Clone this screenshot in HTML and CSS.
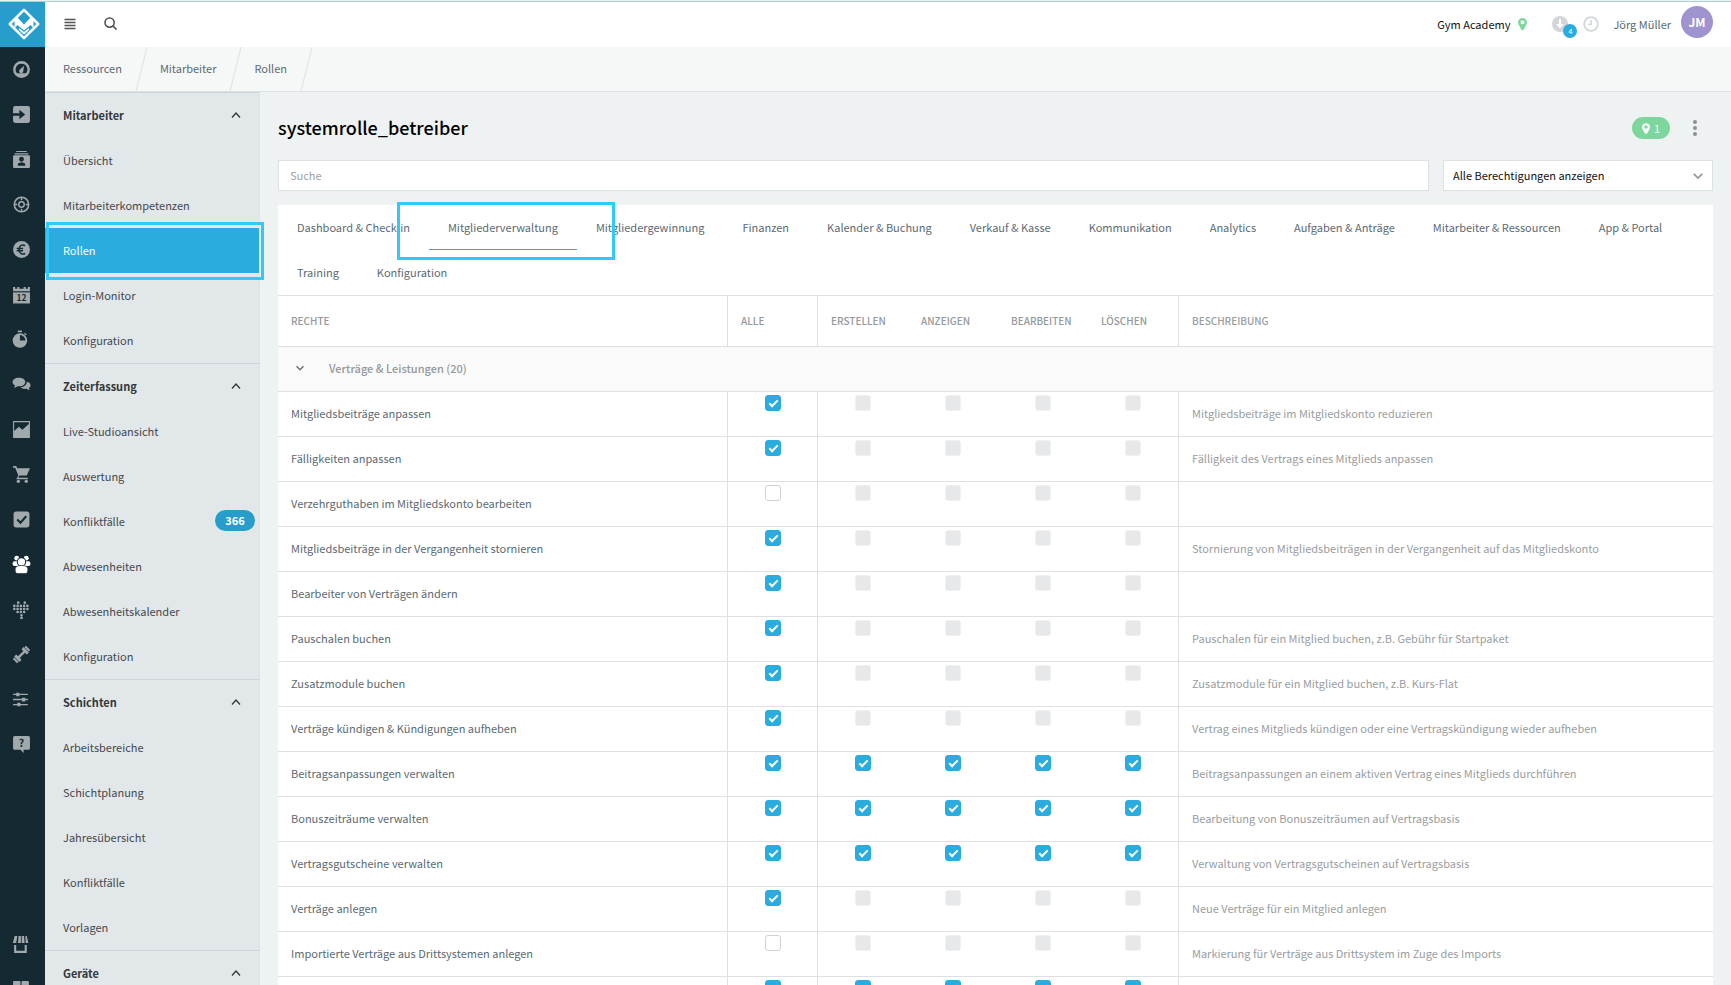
FILE: index.html
```html
<!DOCTYPE html>
<html lang="de">
<head>
    <meta charset="UTF-8">
    <meta name="viewport" content="width=device-width, initial-scale=1.0">
    <title>systemrolle_betreiber</title>
    <link rel="stylesheet" href="styles.css">
</head>
<body>
    <svg class="sprite" aria-hidden="true">
        <symbol id="i-up" viewBox="0 0 10 10"><path d="M1 7.500L5 3l4 4.500" fill="none" stroke="currentColor" stroke-width="1.300"/></symbol>
        <symbol id="i-down" viewBox="0 0 10 10"><path d="M1.500 3.200L5 6.700l3.500-3.500" fill="none" stroke="currentColor" stroke-width="1.500"/></symbol>
        <symbol id="i-pin" viewBox="0 0 9 12"><path fill-rule="evenodd" d="M4.500 0a4.500 4.500 0 0 1 4.500 4.500C9 6.500 6.500 9.500 5.500 12h-2C2.500 9.500 0 6.500 0 4.500A4.500 4.500 0 0 1 4.500 0zm0 2.300a2 2 0 1 0 0 4 2 2 0 0 0 0-4z"/></symbol>
    </svg>

    <div class="app">
        <nav class="rail" aria-label="Hauptnavigation">
            <a class="logo" href="#" aria-label="Start">
                <svg viewBox="0 0 32 32" width="32" height="32">
                    <path d="M16 1.800L30.200 16 16 30.200 1.800 16z" fill="none" stroke="#fff" stroke-width="2.500" stroke-linejoin="round"/>
                    <path d="M6.500 11.500L9 9l7 7.500L23 9l2.500 2.500V20L22.500 17 16 22.500 9.500 17l-3 3z" fill="#fff"/>
                    <path d="M11 20v2l5 4.500 5-4.500v-2l-5 4z" fill="#fff"/>
                </svg>
            </a>
            <a href="#" aria-label="Dashboard"><svg viewBox="0 0 18 18"><path fill-rule="evenodd" d="M9 1a8 8 0 1 1 0 16A8 8 0 0 1 9 1zm0 2.500a5.500 5.500 0 0 0-4.300 9h8.600A5.500 5.500 0 0 0 9 3.500z"/><path d="M11.500 5.500L10.700 10.500a2 2 0 1 1-3-1.700z"/></svg></a>
            <a href="#" aria-label="Check-in"><svg viewBox="0 0 18 18"><path d="M3 1h12a2 2 0 0 1 2 2v12a2 2 0 0 1-2 2H3a2 2 0 0 1-2-2V3a2 2 0 0 1 2-2z"/><path d="M0 7.800h7V4.500L12.500 9 7 13.500v-3.300H0z" fill="#142932"/></svg></a>
            <a href="#" aria-label="Mitglieder"><svg viewBox="0 0 18 18"><path d="M4 1h10v1H4zM2.500 3h13v1.200h-13z"/><path fill-rule="evenodd" d="M2 5h14a1 1 0 0 1 1 1v10a1 1 0 0 1-1 1H2a1 1 0 0 1-1-1V6a1 1 0 0 1 1-1zm7 1.500a2.300 2.300 0 1 0 0 4.600 2.300 2.300 0 0 0 0-4.600zM5.500 15h7v-1.500c0-2.200-7-2.200-7 0z"/></svg></a>
            <a href="#" aria-label="Leads"><svg viewBox="0 0 18 18"><g fill="none" stroke="currentColor"><circle cx="9" cy="9" r="6.800" stroke-width="1.500"/><circle cx="9" cy="9" r="2.600" stroke-width="1.400"/><path d="M9 2v3M9 13v3M2 9h3M13 9h3" stroke-width="1.400"/></g></svg></a>
            <a href="#" aria-label="Finanzen"><svg viewBox="0 0 18 18"><circle cx="9" cy="9" r="8"/><path d="M12.500 5.400C9.800 3.700 6.700 5.200 6.700 9s3.100 5.300 5.800 3.600M4.500 8h6M4.500 10.200h6" fill="none" stroke="#142932" stroke-width="1.500"/></svg></a>
            <a href="#" aria-label="Kalender"><svg viewBox="0 0 18 18"><path d="M1 2h2v1.500h2V2h2v1.500h4V2h2v1.500h2V2h2v4H1z"/><path d="M1 7h16v10.500H1z"/><text x="9" y="15.500" class="cal-text">12</text></svg></a>
            <a href="#" aria-label="Zeit"><svg viewBox="0 0 18 18"><path d="M5.500.500h4v1.600h-4z"/><path d="M12 2.500l2 1.500-1 1-1.500-1.200z"/><circle cx="7.500" cy="10" r="6.900"/><path d="M7.500 10V4.800a5.200 5.200 0 0 1 5.200 5.200z" fill="#142932"/></svg></a>
            <a href="#" aria-label="Kommunikation"><svg viewBox="0 0 18 18"><path d="M14 6.500c5 1 3.800 5 2 5.700.1.900.6 1.400 1.300 2-1.300.1-2.500-.3-3.500-1.100-2 .4-4.500-.1-5.600-1.400C11.500 11.400 14 9.500 14 6.500z"/><path d="M6.800 2.500c7.600 0 7.800 8.200 0 8.200-.6 0-1 0-1.600-.1-1 .8-2.200 1.300-3.500 1.200.7-.6 1-1.100 1.100-2C-1.500 7.500.5 2.500 6.800 2.500z"/></svg></a>
            <a href="#" aria-label="Analytics"><svg viewBox="0 0 18 18"><path fill-rule="evenodd" d="M1 1h16v16H1zm1 1.200v8.300l4.500-4 3.300 2.700L16 3.800V2.200z"/></svg></a>
            <a href="#" aria-label="Verkauf"><svg viewBox="0 0 18 18"><path d="M1 1h3l1 2h12l-3 7H7l-1 2h9v1.500H4L6 10 3 2.500H1z"/><circle cx="6" cy="15.500" r="1.600"/><circle cx="13.500" cy="15.500" r="1.600"/></svg></a>
            <a href="#" aria-label="Aufgaben"><svg viewBox="0 0 18 18"><rect x="1.500" y="1.500" width="15" height="15" rx="2.500"/><path d="M5 9l3 3 5.500-6" fill="none" stroke="#142932" stroke-width="2"/></svg></a>
            <a href="#" class="active" aria-label="Ressourcen"><svg viewBox="0 0 18 18"><circle cx="4.500" cy="3" r="2.300"/><circle cx="13.500" cy="3" r="2.300"/><rect x=".5" y="6" width="17" height="4.500" rx="2"/><circle cx="9" cy="6.500" r="4" stroke="#142932"/><path d="M3 14c0-3 2-4 6-4s6 1 6 4c0 2.500-1 3.500-2 3.500H5c-1 0-2-1-2-3.500z" stroke="#142932" stroke-width=".6"/></svg></a>
            <a href="#" aria-label="Gesundheit"><svg viewBox="0 0 18 18"><g fill="none" stroke="currentColor" stroke-width="2.500" stroke-linecap="round" stroke-dasharray="0 3.100"><path d="M5.900 2.500h.1M12.100 2.500h.1M2.200 5.600h14M2.200 8.500h14M5.300 11.400h7.800M9 14.500h.1M9 17h.1"/></g></svg></a>
            <a href="#" aria-label="Training"><svg viewBox="0 0 18 18"><g fill="none" stroke="currentColor"><path d="M6 12l6-6" stroke-width="2.200"/><path d="M10 3l5 5M3 10l5 5" stroke-width="2.800"/><path d="M12.500 1.500l4 4M1.500 12.500l4 4" stroke-width="2"/></g></svg></a>
            <a href="#" aria-label="Einstellungen"><svg viewBox="0 0 18 18"><path d="M1 4.200h14M1 9h14M1 13.800h14" stroke="currentColor" stroke-width="1.300"/><path d="M4 2.500h3V6H4zM9.500 7.300h3v3.500h-3zM5 12h3v3.500H5z"/></svg></a>
            <a href="#" aria-label="Hilfe"><svg viewBox="0 0 18 18"><path d="M2.500 1h13A1.500 1.500 0 0 1 17 2.500v10a1.500 1.500 0 0 1-1.500 1.500H11v3l-3-3H2.500A1.500 1.500 0 0 1 1 12.500v-10A1.500 1.500 0 0 1 2.500 1z"/><text x="9" y="11" class="help-text">?</text></svg></a>
            <div class="rail-bottom">
                <a href="#" aria-label="Shop"><svg viewBox="0 0 18 18"><path d="M2.500 1H5L4 7.500H.8zM6.200 1h2.200v6.500H5.700zM9.200 1h2.200l.6 6.500H9.200zM12.700 1H14l1.500 6.500H13z"/><path d="M2 9.500h2V15h8V9.500h2V17H2z"/></svg></a>
                <a href="#" aria-label="Module"><svg viewBox="0 0 18 18"><rect x="1" y="1" width="7" height="7" rx="1"/><rect x="9" y="1" width="7" height="7" rx="1"/><rect x="1" y="9" width="7" height="7" rx="1"/><rect x="9" y="9" width="7" height="7" rx="1"/></svg></a>
            </div>
        </nav>

        <div class="page">
            <header class="topbar">
                <button class="icon-btn" aria-label="Menü"><svg viewBox="0 0 12 12" width="12" height="12"><path d="M.500 1.500h11M.500 4.500h11M.500 7.500h11M.500 10.500h11" stroke="currentColor" stroke-width="1.500"/></svg></button>
                <button class="icon-btn" aria-label="Suche öffnen"><svg viewBox="0 0 13 13" width="13" height="13"><g fill="none" stroke="currentColor" stroke-width="1.600"><circle cx="5.600" cy="5.600" r="4.600"/><path d="M9 9l3.500 3.500"/></g></svg></button>
                <div class="account">
                    <span class="studio">Gym Academy</span>
                    <svg class="studio-pin" width="9" height="12"><use href="#i-pin"/></svg>
                    <button class="downloads" aria-label="Downloads">
                        <svg viewBox="0 0 16 16" width="16" height="16"><circle cx="8" cy="8" r="8" fill="#d3d6d9"/><path d="M7 3h2v5h3l-4 4.500L4 8h3z" fill="#fff"/></svg>
                        <span class="count">4</span>
                    </button>
                    <button class="history" aria-label="Verlauf"><svg viewBox="0 0 16 16" width="16" height="16"><g fill="none" stroke="#d3d6d9"><circle cx="8" cy="8" r="6.800" stroke-width="1.800"/><path d="M8 4v4.500H5" stroke-width="1.600"/></g></svg></button>
                    <span class="user">Jörg Müller</span>
                    <span class="avatar">JM</span>
                </div>
            </header>

            <nav class="breadcrumb" aria-label="Pfad">
                <a href="#">Ressourcen</a>
                <a href="#">Mitarbeiter</a>
                <a href="#">Rollen</a>
            </nav>

            <div class="body">
                <aside class="sidebar">
                    <section>
                        <button class="side-head">Mitarbeiter <svg width="10" height="10"><use href="#i-up"/></svg></button>
                        <a href="#">Übersicht</a>
                        <a href="#">Mitarbeiterkompetenzen</a>
                        <a href="#" class="active">Rollen</a>
                        <a href="#">Login-Monitor</a>
                        <a href="#">Konfiguration</a>
                    </section>
                    <section>
                        <button class="side-head">Zeiterfassung <svg width="10" height="10"><use href="#i-up"/></svg></button>
                        <a href="#">Live-Studioansicht</a>
                        <a href="#">Auswertung</a>
                        <a href="#">Konfliktfälle <span class="side-count">366</span></a>
                        <a href="#">Abwesenheiten</a>
                        <a href="#">Abwesenheitskalender</a>
                        <a href="#">Konfiguration</a>
                    </section>
                    <section>
                        <button class="side-head">Schichten <svg width="10" height="10"><use href="#i-up"/></svg></button>
                        <a href="#">Arbeitsbereiche</a>
                        <a href="#">Schichtplanung</a>
                        <a href="#">Jahresübersicht</a>
                        <a href="#">Konfliktfälle</a>
                        <a href="#">Vorlagen</a>
                    </section>
                    <section>
                        <button class="side-head">Geräte <svg width="10" height="10"><use href="#i-up"/></svg></button>
                    </section>
                </aside>

                <main class="content">
                    <div class="title-row">
                        <h1>systemrolle_betreiber</h1>
                        <span class="studio-count"><svg width="8" height="11" viewBox="0 0 9 12"><use href="#i-pin"/></svg>1</span>
                        <button class="more" aria-label="Mehr"><svg viewBox="0 0 4 16" width="4" height="16"><circle cx="2" cy="2" r="2"/><circle cx="2" cy="8" r="2"/><circle cx="2" cy="14" r="2"/></svg></button>
                    </div>

                    <div class="filter-row">
                        <input type="text" class="search" placeholder="Suche" aria-label="Suche">
                        <div class="select-wrap">
                            <select aria-label="Berechtigungen">
                                <option>Alle Berechtigungen anzeigen</option>
                            </select>
                            <svg width="12" height="12"><use href="#i-down"/></svg>
                        </div>
                    </div>

                    <div class="card">
                        <nav class="tabs" aria-label="Bereiche">
                            <a href="#">Dashboard &amp; Check-in</a>
                            <a href="#" class="active">Mitgliederverwaltung</a>
                            <a href="#">Mitgliedergewinnung</a>
                            <a href="#">Finanzen</a>
                            <a href="#">Kalender &amp; Buchung</a>
                            <a href="#">Verkauf &amp; Kasse</a>
                            <a href="#">Kommunikation</a>
                            <a href="#">Analytics</a>
                            <a href="#">Aufgaben &amp; Anträge</a>
                            <a href="#">Mitarbeiter &amp; Ressourcen</a>
                            <a href="#">App &amp; Portal</a>
                            <a href="#">Training</a>
                            <a href="#">Konfiguration</a>
                        </nav>

                        <table class="rights">
                            <colgroup>
                                <col class="col-name">
                                <col class="col-check" span="5">
                                <col>
                            </colgroup>
                            <thead>
                                <tr>
                                    <th>Rechte</th>
                                    <th>Alle</th>
                                    <th>Erstellen</th>
                                    <th>Anzeigen</th>
                                    <th>Bearbeiten</th>
                                    <th>Löschen</th>
                                    <th>Beschreibung</th>
                                </tr>
                            </thead>
                            <tbody id="rightsBody">
                                <tr class="group">
                                    <td colspan="7"><button><svg width="10" height="10"><use href="#i-down"/></svg>Verträge &amp; Leistungen (20)</button></td>
                                </tr>
                            </tbody>
                        </table>
                    </div>
                </main>
            </div>
        </div>
    </div>

    <script src="script.js"></script>
</body>
</html>
```

FILE: styles.css
```css
*, *::before, *::after {
    box-sizing: border-box;
}
body, html {
    margin: 0;
    padding: 0;
    height: 100%;
    overflow: hidden;
}
body {
    font-family: "Noto Sans CJK SC", "Noto Sans", sans-serif;
    font-size: 11px;
    line-height: 18px;
    color: #5b6a72;
    background-color: #eef2f3;
    border-top: 1px solid #e6f5f5;
}
a {
    color: inherit;
    text-decoration: none;
}
button, input, select {
    font: inherit;
    color: inherit;
    margin: 0;
    padding: 0;
    border: none;
    background: none;
}
button {
    cursor: pointer;
}
svg {
    display: block;
    flex: none;
    fill: currentColor;
}
.sprite {
    position: absolute;
    width: 0;
    height: 0;
}
.app {
    display: flex;
    height: 100%;
    border-top: 1px solid #b3cccf;
}

/* icon rail */
.rail {
    width: 45px;
    flex: none;
    display: flex;
    flex-direction: column;
    background-color: #142932;
    color: #a1a9ad;
    overflow: hidden;
}
.rail a {
    display: flex;
    flex: none;
    align-items: center;
    height: 45px;
    padding: 0 0 1px 12px;
}
.rail a svg {
    width: 19px;
    height: 19px;
}
.rail a.active {
    color: #fff;
}
.rail .logo {
    background-color: #269dcb;
    padding-left: 8px;
}
.rail .logo svg {
    width: 32px;
    height: 32px;
}
.rail-bottom {
    margin-top: auto;
    margin-bottom: -27px;
}
.cal-text, .help-text {
    font-weight: bold;
    text-anchor: middle;
    fill: #142932;
}
.cal-text {
    font-size: 8px;
}
.help-text {
    font-size: 10px;
}

.page {
    flex: 1;
    min-width: 0;
    display: flex;
    flex-direction: column;
}

/* top bar */
.topbar {
    flex: none;
    display: flex;
    align-items: center;
    height: 45px;
    padding: 0 18px 2px 19px;
    background-color: #fff;
}
.icon-btn {
    width: 40px;
    color: #4f5254;
}
.account {
    display: flex;
    align-items: center;
    margin-left: auto;
}
.studio {
    color: #111;
}
.studio-pin {
    margin-left: 8px;
    color: #7dd69b;
}
.downloads {
    position: relative;
    margin-left: 25px;
}
.count {
    position: absolute;
    left: 11px;
    top: 8px;
    width: 14px;
    height: 14px;
    border-radius: 50%;
    background-color: #2aacdf;
    color: #fff;
    font-size: 7px;
    line-height: 14px;
    text-align: center;
}
.history {
    margin-left: 15px;
}
.user {
    margin-left: 14px;
}
.avatar {
    width: 32px;
    height: 32px;
    margin-left: 10px;
    margin-bottom: 4px;
    border-radius: 50%;
    background-color: #a094d0;
    color: #fff;
    font-size: 12px;
    font-weight: bold;
    line-height: 32px;
    text-align: center;
}

/* breadcrumb */
.breadcrumb {
    flex: none;
    display: flex;
    height: 45px;
    background-color: #f6f8f8;
    border-bottom: 1px solid #dbe2e6;
}
.breadcrumb a {
    position: relative;
    padding: 12px 20px 0 18px;
}
.breadcrumb a::after {
    content: "";
    position: absolute;
    top: 0;
    bottom: 0;
    right: 0;
    width: 1px;
    background-color: #dbe0e2;
    transform: skewX(-14deg);
}

.body {
    flex: 1;
    display: flex;
    min-height: 0;
}

/* sidebar */
.sidebar {
    width: 215px;
    flex: none;
    background-color: #e2e7ea;
    border-right: 1px solid #dce3e6;
    color: #43494d;
}
.sidebar section {
    border-top: 1px solid #ccd5d9;
}
.side-head, .sidebar a {
    position: relative;
    display: flex;
    align-items: center;
    justify-content: space-between;
    width: 100%;
    height: 45px;
    padding: 0 18px 2px;
}
.side-head {
    font-weight: bold;
    color: #33383b;
}
.sidebar a.active {
    background-color: #2aacdf;
    color: #fff;
}
.sidebar a.active::after {
    content: "";
    position: absolute;
    top: -6px;
    right: -5px;
    bottom: -7px;
    left: 1px;
    z-index: 2;
    border: 3px solid #33c8fa;
}
.side-count {
    width: 40px;
    margin-right: -14px;
    border-radius: 11px;
    background-color: #269dcb;
    color: #fff;
    font-weight: bold;
    line-height: 21px;
    text-align: center;
}

/* content */
.content {
    flex: 1;
    min-width: 0;
    padding: 18px;
}
.title-row {
    display: flex;
    align-items: center;
    height: 36px;
}
h1 {
    margin: 0;
    padding-bottom: 2px;
    font-size: 18px;
    font-weight: 500;
    line-height: 24px;
    color: #000;
}
.studio-count {
    display: flex;
    align-items: center;
    justify-content: center;
    gap: 4px;
    width: 38px;
    height: 22px;
    margin-left: auto;
    border-radius: 11px;
    background-color: #7dd69b;
    color: #fff;
}
.more {
    width: 43px;
    padding-left: 23px;
    color: #8b9195;
}
.filter-row {
    display: flex;
    gap: 14px;
    margin: 14px 0;
}
.search, .select-wrap select {
    width: 100%;
    height: 31px;
    background-color: #fff;
    border: 1px solid #dce2e5;
}
.search {
    flex: 1;
    padding: 0 11px 2px;
}
.search::placeholder {
    color: #a0a3a5;
    opacity: 1;
}
.select-wrap {
    position: relative;
    width: 270px;
}
.select-wrap select {
    padding: 0 9px 2px;
    color: #111;
    appearance: none;
}
.select-wrap svg {
    position: absolute;
    right: 9px;
    top: 10px;
    color: #92989b;
    pointer-events: none;
}
.card {
    background-color: #fff;
}

/* tabs */
.tabs {
    display: flex;
    flex-wrap: wrap;
    border-bottom: 1px solid #dfe1e2;
}
.tabs a {
    position: relative;
    height: 45px;
    padding: 0 19px;
    line-height: 45px;
}
.tabs a.active {
    border-bottom: 1px solid #2aacdf;
}
.tabs a.active::after {
    content: "";
    position: absolute;
    top: -3px;
    right: -38px;
    bottom: -11px;
    left: -32px;
    z-index: 2;
    border: 3px solid #33c8fa;
}

/* rights table */
.rights {
    width: 100%;
    table-layout: fixed;
    border-collapse: separate;
    border-spacing: 0;
}
.col-name {
    width: 450px;
}
.col-check {
    width: 90px;
}
.rights th, .rights td {
    height: 45px;
    padding: 0 13px 2px;
    border-bottom: 1px solid #dfe0e1;
    text-align: left;
}
.rights th {
    height: 51px;
    padding-bottom: 0;
    font-size: 10px;
    font-weight: 500;
    text-transform: uppercase;
    color: #94989b;
}
.rights th:nth-child(1), .rights th:nth-child(2),
.rights td:nth-child(1):not([colspan]), .rights td:nth-child(2) {
    border-right: 1px solid #dfe0e1;
}
.rights th:nth-child(7), .rights td:nth-child(7) {
    border-left: 1px solid #dfe0e1;
    color: #999da0;
}
.rights td.check {
    padding: 3px 0 0;
    text-align: center;
    vertical-align: top;
    line-height: 16px;
}
.group td {
    background-color: #fafafa;
}
.group button {
    display: flex;
    align-items: center;
    gap: 24px;
    padding-left: 4px;
    font-weight: 500;
    color: #94989b;
}
.group svg {
    color: #6d7173;
}
.check input {
    position: relative;
    appearance: none;
    display: inline-block;
    width: 16px;
    height: 16px;
    vertical-align: top;
    border: 1px solid #d0d3d5;
    border-radius: 3px;
    background-color: #fff;
}
.check input:checked {
    background-color: #2aacdf;
    border-color: #2aacdf;
}
.check input:checked::after {
    content: "";
    position: absolute;
    left: 5px;
    top: 2px;
    width: 5px;
    height: 9px;
    border: solid #fff;
    border-width: 0 2px 2px 0;
    transform: rotate(45deg);
}
.check input:disabled {
    background-color: #e6e8e9;
    border-color: #eff0f1;
}
```

FILE: script.js
```js
// name, "Alle" checked, single rights available, description
const rights = [
    ['Mitgliedsbeiträge anpassen', true, false, 'Mitgliedsbeiträge im Mitgliedskonto reduzieren'],
    ['Fälligkeiten anpassen', true, false, 'Fälligkeit des Vertrags eines Mitglieds anpassen'],
    ['Verzehrguthaben im Mitgliedskonto bearbeiten', false, false, ''],
    ['Mitgliedsbeiträge in der Vergangenheit stornieren', true, false, 'Stornierung von Mitgliedsbeiträgen in der Vergangenheit auf das Mitgliedskonto'],
    ['Bearbeiter von Verträgen ändern', true, false, ''],
    ['Pauschalen buchen', true, false, 'Pauschalen für ein Mitglied buchen, z.B. Gebühr für Startpaket'],
    ['Zusatzmodule buchen', true, false, 'Zusatzmodule für ein Mitglied buchen, z.B. Kurs-Flat'],
    ['Verträge kündigen & Kündigungen aufheben', true, false, 'Vertrag eines Mitglieds kündigen oder eine Vertragskündigung wieder aufheben'],
    ['Beitragsanpassungen verwalten', true, true, 'Beitragsanpassungen an einem aktiven Vertrag eines Mitglieds durchführen'],
    ['Bonuszeiträume verwalten', true, true, 'Bearbeitung von Bonuszeiträumen auf Vertragsbasis'],
    ['Vertragsgutscheine verwalten', true, true, 'Verwaltung von Vertragsgutscheinen auf Vertragsbasis'],
    ['Verträge anlegen', true, false, 'Neue Verträge für ein Mitglied anlegen'],
    ['Importierte Verträge aus Drittsystemen anlegen', false, false, 'Markierung für Verträge aus Drittsystem im Zuge des Imports'],
    ['', true, true, '']
];
const columns = ['Alle', 'Erstellen', 'Anzeigen', 'Bearbeiten', 'Löschen'];
const rightsBody = document.getElementById('rightsBody');

rights.forEach(([name, all, single, description]) => {
    const row = rightsBody.insertRow();
    row.insertCell().textContent = name;

    columns.forEach((column, i) => {
        const cell = row.insertCell();
        const box = document.createElement('input');
        box.type = 'checkbox';
        box.checked = i === 0 ? all : single;
        box.disabled = i > 0 && !single;
        box.setAttribute('aria-label', `${column}: ${name}`);
        cell.className = 'check';
        cell.appendChild(box);
    });

    row.insertCell().textContent = description;
});
```
